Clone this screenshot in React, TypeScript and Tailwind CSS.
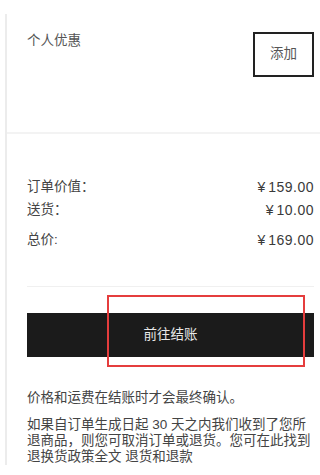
const font = { fontFamily: '"Liberation Sans", "Noto Sans CJK SC", sans-serif' };

function Row({ label, value, className }: { label: string; value: string; className?: string }) {
  return (
    <div className={`flex items-center justify-between leading-[20px] ${className ?? ''}`}>
      <span className="text-[13.5px] text-[#444]">{label}</span>
      <span className="flex items-center text-[14px] text-[#3a3a3a]">
        <span className="mr-[3px]">¥</span>
        <span className="tracking-[0.5px]">{value}</span>
      </span>
    </div>
  );
}

export default function App() {
  return (
    <div className="h-[475px] w-[320px] overflow-hidden bg-white pt-[14px] pl-[5px]" style={font}>
      <div className="border-l-2 border-[#ececec]">
        {/* personal offer */}
        <div className="flex h-[120px] items-start justify-between border-b-2 border-[#f3f3f3] pt-[18px] pr-[6px] pl-[20px]">
          <span className="text-[13.5px] leading-[18px] text-[#555]">个人优惠</span>
          <button className="flex h-[45px] w-[61px] items-center justify-center border-2 border-[#222] text-[13.5px] text-[#555]">
            添加
          </button>
        </div>

        {/* summary */}
        <div className="pr-[6px] pl-[20px]">
          <div className="border-b border-[#f0f0f0] pt-[43px] pb-[36px]">
            <Row label="订单价值：" value="159.00" />
            <Row label="送货：" value="10.00" className="mt-[3px]" />
            <Row label="总价:" value="169.00" className="mt-[10px]" />
          </div>

          <div className="relative mt-[26px]">
            <button className="flex h-[44px] w-full items-center justify-center bg-[#1b1b1b] text-[13.5px] text-[#e8e8e8]">
              前往结账
            </button>
            <div className="pointer-events-none absolute top-[-18px] left-[80px] h-[72px] w-[198px] border-2 border-[#e53d3d]" />
          </div>

          <p className="mt-[32px] text-[13.5px] leading-[17px] text-[#444]">价格和运费在结账时才会最终确认。</p>
          <p className="mt-[11px] text-[13.5px] leading-[16px] text-[#444]">
            如果自订单生成日起 30 天之内我们收到了您所退商品，则您可取消订单或退货。您可在此找到退换货政策全文 退货和退款
          </p>
        </div>
      </div>
    </div>
  );
}
